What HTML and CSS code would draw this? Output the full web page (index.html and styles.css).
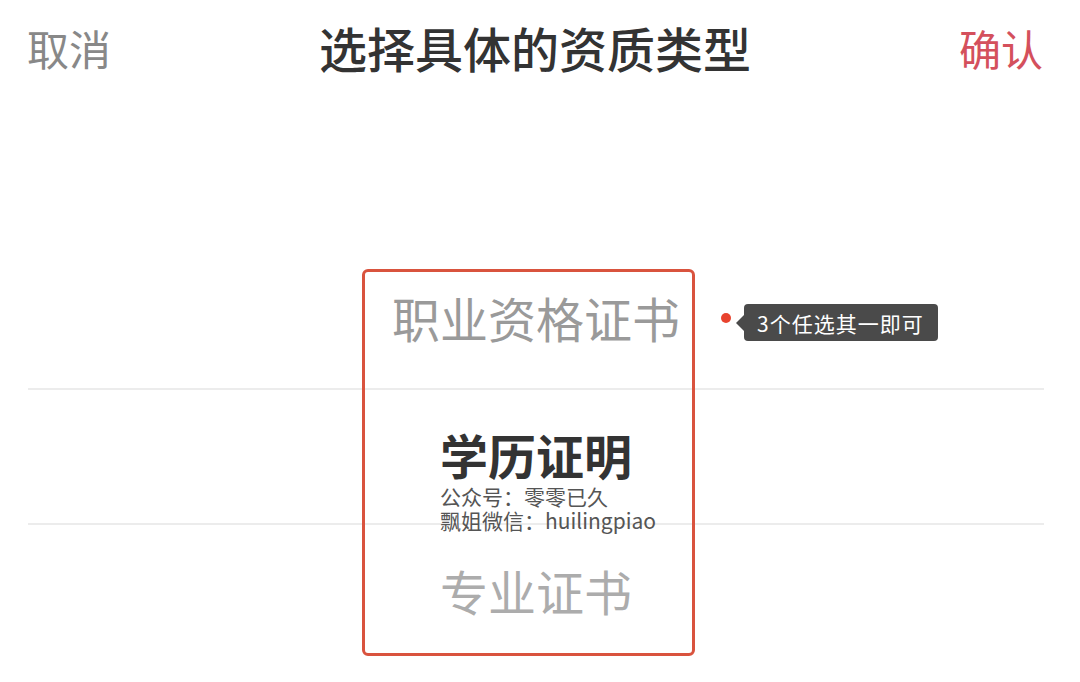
FILE: index.html
```html
<!DOCTYPE html>
<html lang="zh-CN">

<head>
  <meta charset="UTF-8">
  <meta name="viewport" content="width=device-width, initial-scale=1.0">
  <title>选择具体的资质类型</title>
  <link rel="stylesheet" href="styles.css">
</head>

<body>
  <div class="top-bar">
    <button class="bar-btn cancel">取消</button>
    <div class="bar-title">选择具体的资质类型</div>
    <button class="bar-btn confirm">确认</button>
  </div>

  <div class="picker">
    <div class="picker-row">
      <span class="picker-label faded">职业资格证书</span>
    </div>
    <div class="picker-row current">
      <span class="picker-label active">
        学历证明
        <span class="watermark">公众号：零零已久<br>飘姐微信：huilingpiao</span>
      </span>
    </div>
    <div class="picker-row">
      <span class="picker-label faded light">专业证书</span>
    </div>

    <!-- annotation -->
    <div class="mark-box"></div>
    <div class="mark-dot"></div>
    <div class="mark-tip">3个任选其一即可</div>
  </div>
</body>

</html>
```

FILE: styles.css
```css
body {
  margin: 0;
  background: #fff;
  font-family: "Noto Sans CJK SC", "Noto Sans", sans-serif;
}

.top-bar {
  box-sizing: border-box;
  display: flex;
  justify-content: space-between;
  align-items: center;
  height: 100px;
  padding: 0 37px 6px 27px;
}

.bar-btn {
  background: transparent;
  border: none;
  padding: 0;
  font-family: inherit;
  font-size: 42px;
  cursor: pointer;
}

.cancel {
  color: #888;
}

.confirm {
  color: #d4505c;
}

.bar-title {
  color: #333;
  font-size: 48px;
  font-weight: 500;
}

.picker {
  position: relative;
  margin: 152px 36px 0 28px;
}

.picker-row {
  box-sizing: border-box;
  display: flex;
  justify-content: center;
  align-items: center;
  height: 136px;
  padding-bottom: 6px;
}

.picker-row.current {
  height: 137px;
  border-top: 2px solid #ececec;
  border-bottom: 2px solid #ececec;
}

.picker-label {
  position: relative;
  font-size: 48px;
  line-height: 48px;
}

.faded {
  color: #9a9a9a;
}

.faded.light {
  color: #acacac;
}

.active {
  color: #333;
  font-weight: 700;
}

.watermark {
  position: absolute;
  left: 0;
  top: 100%;
  margin-top: 6px;
  white-space: nowrap;
  color: #555;
  font-size: 21px;
  font-weight: 400;
  line-height: 24px;
}

.mark-box {
  position: absolute;
  left: 334px;
  top: 17px;
  width: 327px;
  height: 381px;
  border: 3px solid #d9533e;
  border-radius: 6px;
}

.mark-dot {
  position: absolute;
  left: 693px;
  top: 61px;
  width: 10px;
  height: 10px;
  border-radius: 50%;
  background: #e8432e;
}

.mark-tip {
  position: absolute;
  left: 716px;
  top: 52px;
  height: 37px;
  padding: 0 14px 0 13px;
  display: flex;
  align-items: center;
  background: #4a4a4a;
  border-radius: 4px;
  color: #fff;
  font-size: 21px;
  letter-spacing: 1px;
}

.mark-tip::before {
  content: "";
  position: absolute;
  left: -8px;
  top: 11px;
  border-top: 8px solid transparent;
  border-bottom: 8px solid transparent;
  border-right: 8px solid #4a4a4a;
}
```
